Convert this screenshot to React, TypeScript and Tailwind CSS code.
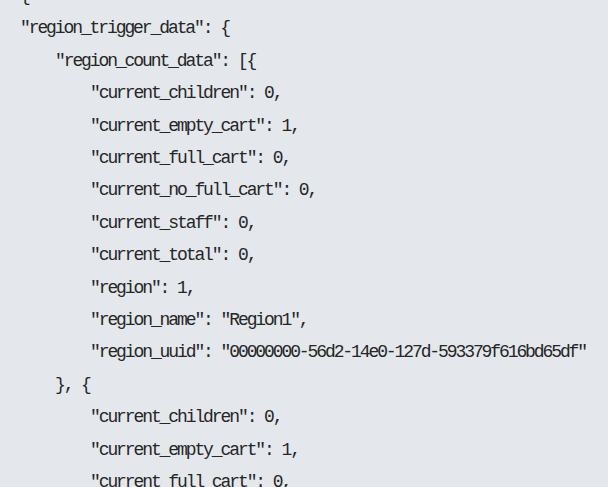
import React from "react";

const lines: [number, string][] = [
  [1, "{"],
  [1, '"region_trigger_data": {'],
  [2, '"region_count_data": [{'],
  [3, '"current_children": 0,'],
  [3, '"current_empty_cart": 1,'],
  [3, '"current_full_cart": 0,'],
  [3, '"current_no_full_cart": 0,'],
  [3, '"current_staff": 0,'],
  [3, '"current_total": 0,'],
  [3, '"region": 1,'],
  [3, '"region_name": "Region1",'],
  [3, '"region_uuid": "00000000-56d2-14e0-127d-593379f616bd65df"'],
  [2, "}, {"],
  [3, '"current_children": 0,'],
  [3, '"current_empty_cart": 1,'],
  [3, '"current_full_cart": 0,'],
];

export default function App() {
  return (
    <div className="w-[608px] h-[487px] overflow-hidden bg-[#e4e8ec]">
      <div className="mt-[-20px] pl-[20px] text-[#262626] font-['Liberation_Mono','DejaVu_Sans_Mono',monospace] text-[18px] leading-[32.4px] tracking-[-2.1px] whitespace-pre">
        {lines.map(([lvl, t], i) => (
          <div
            key={i}
            className={
              lvl === 1 ? "pl-0" : lvl === 2 ? "pl-[35px]" : "pl-[70px]"
            }
          >
            {t}
          </div>
        ))}
      </div>
    </div>
  );
}
